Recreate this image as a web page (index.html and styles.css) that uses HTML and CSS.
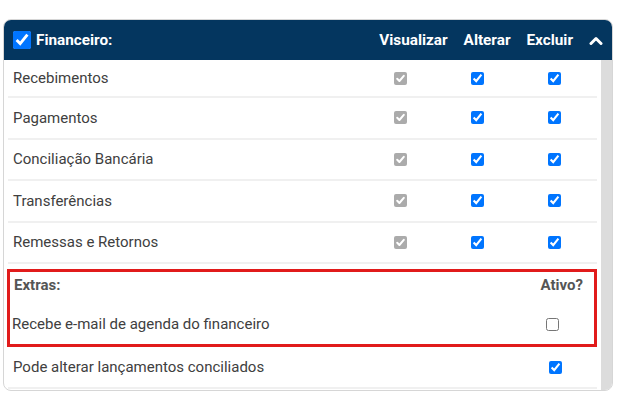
FILE: index.html
```html
<!DOCTYPE html>
<html lang="pt-BR">
<head>
    <meta charset="UTF-8">
    <meta name="viewport" content="width=device-width, initial-scale=1.0">
    <title>Permissões - Financeiro</title>
    <link rel="stylesheet" href="styles.css">
</head>
<body>
    <div class="card">
        <div class="card-header">
            <label class="title">
                <input type="checkbox" class="big-check" checked>
                Financeiro:
            </label>
            <span class="col-label">Visualizar</span>
            <span class="col-label">Alterar</span>
            <span class="col-label">Excluir</span>
            <svg class="chevron" width="14" height="9" viewBox="0 0 14 9">
                <polyline points="2,7.5 7,2.5 12,7.5" fill="none" stroke="#fff" stroke-width="3" stroke-linecap="round" stroke-linejoin="round"/>
            </svg>
        </div>
        <div class="card-body">
            <div class="list">
                <div class="row first">
                    <span>Recebimentos</span>
                    <span class="locked" role="checkbox" aria-checked="true" aria-disabled="true"><svg width="13" height="13" viewBox="0 0 13 13"><polyline points="3.2,6.8 5.4,9 9.8,3.8" fill="none" stroke="#fff" stroke-width="2" stroke-linecap="round" stroke-linejoin="round"/></svg></span>
                    <input type="checkbox" checked>
                    <input type="checkbox" checked>
                </div>
                <div class="row">
                    <span>Pagamentos</span>
                    <span class="locked" role="checkbox" aria-checked="true" aria-disabled="true"><svg width="13" height="13" viewBox="0 0 13 13"><polyline points="3.2,6.8 5.4,9 9.8,3.8" fill="none" stroke="#fff" stroke-width="2" stroke-linecap="round" stroke-linejoin="round"/></svg></span>
                    <input type="checkbox" checked>
                    <input type="checkbox" checked>
                </div>
                <div class="row">
                    <span>Conciliação Bancária</span>
                    <span class="locked" role="checkbox" aria-checked="true" aria-disabled="true"><svg width="13" height="13" viewBox="0 0 13 13"><polyline points="3.2,6.8 5.4,9 9.8,3.8" fill="none" stroke="#fff" stroke-width="2" stroke-linecap="round" stroke-linejoin="round"/></svg></span>
                    <input type="checkbox" checked>
                    <input type="checkbox" checked>
                </div>
                <div class="row">
                    <span>Transferências</span>
                    <span class="locked" role="checkbox" aria-checked="true" aria-disabled="true"><svg width="13" height="13" viewBox="0 0 13 13"><polyline points="3.2,6.8 5.4,9 9.8,3.8" fill="none" stroke="#fff" stroke-width="2" stroke-linecap="round" stroke-linejoin="round"/></svg></span>
                    <input type="checkbox" checked>
                    <input type="checkbox" checked>
                </div>
                <div class="row">
                    <span>Remessas e Retornos</span>
                    <span class="locked" role="checkbox" aria-checked="true" aria-disabled="true"><svg width="13" height="13" viewBox="0 0 13 13"><polyline points="3.2,6.8 5.4,9 9.8,3.8" fill="none" stroke="#fff" stroke-width="2" stroke-linecap="round" stroke-linejoin="round"/></svg></span>
                    <input type="checkbox" checked>
                    <input type="checkbox" checked>
                </div>

                <!-- bloco destacado -->
                <div class="extras">
                    <div class="extras-head">
                        <span>Extras:</span>
                        <span class="ativo">Ativo?</span>
                    </div>
                    <div class="extra-row">
                        <span>Recebe e-mail de agenda do financeiro</span>
                        <input type="checkbox">
                    </div>
                </div>

                <div class="extra-row last">
                    <span>Pode alterar lançamentos conciliados</span>
                    <input type="checkbox" checked>
                </div>
            </div>
            <div class="scrollbar"></div>
        </div>
    </div>
</body>
</html>
```

FILE: styles.css
```css
/* Page */
body {
    margin: 0;
    padding: 19px 0 0 3px;
    font-family: Roboto, "Liberation Sans", sans-serif;
    font-size: 15px;
    color: #404040;
    background: #fff;
}

/* Carte */
.card {
    width: 608px;
    height: 370px;
    border: 1px solid #d6d6d6;
    border-radius: 8px;
    overflow: hidden;
    display: flex;
    flex-direction: column;
}

.card-header {
    background-color: #04365f;
    color: #fff;
    height: 40px;
    flex-shrink: 0;
    display: flex;
    align-items: center;
    gap: 16px;
    padding: 0 9px;
    font-weight: bold;
    font-size: 15.3px;
}

.title {
    flex: 1;
    display: flex;
    align-items: center;
    gap: 5px;
}

.card-header .big-check {
    width: 18px;
    height: 18px;
    margin: 0;
}

.card-body {
    flex: 1;
    display: flex;
    min-height: 0;
}

.list {
    flex: 1;
    padding: 0 4px 0 4px;
}

.scrollbar {
    width: 11px;
    background-color: #dcdcdc;
}

/* Lignes */
.row {
    display: grid;
    grid-template-columns: 1fr 77px 77px 77px;
    align-items: center;
    height: 39.5px;
    padding: 0 4px 0 5px;
    border-bottom: 2px solid #f0f0f0;
}

.row.first {
    height: 36px;
}

input[type="checkbox"] {
    justify-self: center;
    margin: 0;
    width: 13px;
    height: 13px;
}

/* case grise non modifiable */
.locked {
    justify-self: center;
    width: 13px;
    height: 13px;
    border-radius: 2px;
    background-color: #ababab;
    display: flex;
}

/* Bloc rouge */
.extras {
    border: 3.5px solid #e11b1b;
    margin: 5px 0 0 -1px;
}

.extras-head {
    display: flex;
    justify-content: space-between;
    align-items: center;
    height: 22px;
    padding: 2px 11px 0 4px;
    font-weight: bold;
    color: #555;
}

.extra-row {
    display: grid;
    grid-template-columns: 1fr 77px;
    align-items: center;
    height: 40px;
    padding: 0 3px 0 2px;
    margin-top: 8px;
}

.extra-row.last {
    margin-top: 0;
    padding-left: 5px;
    border-bottom: 2px solid #f0f0f0;
}
```
